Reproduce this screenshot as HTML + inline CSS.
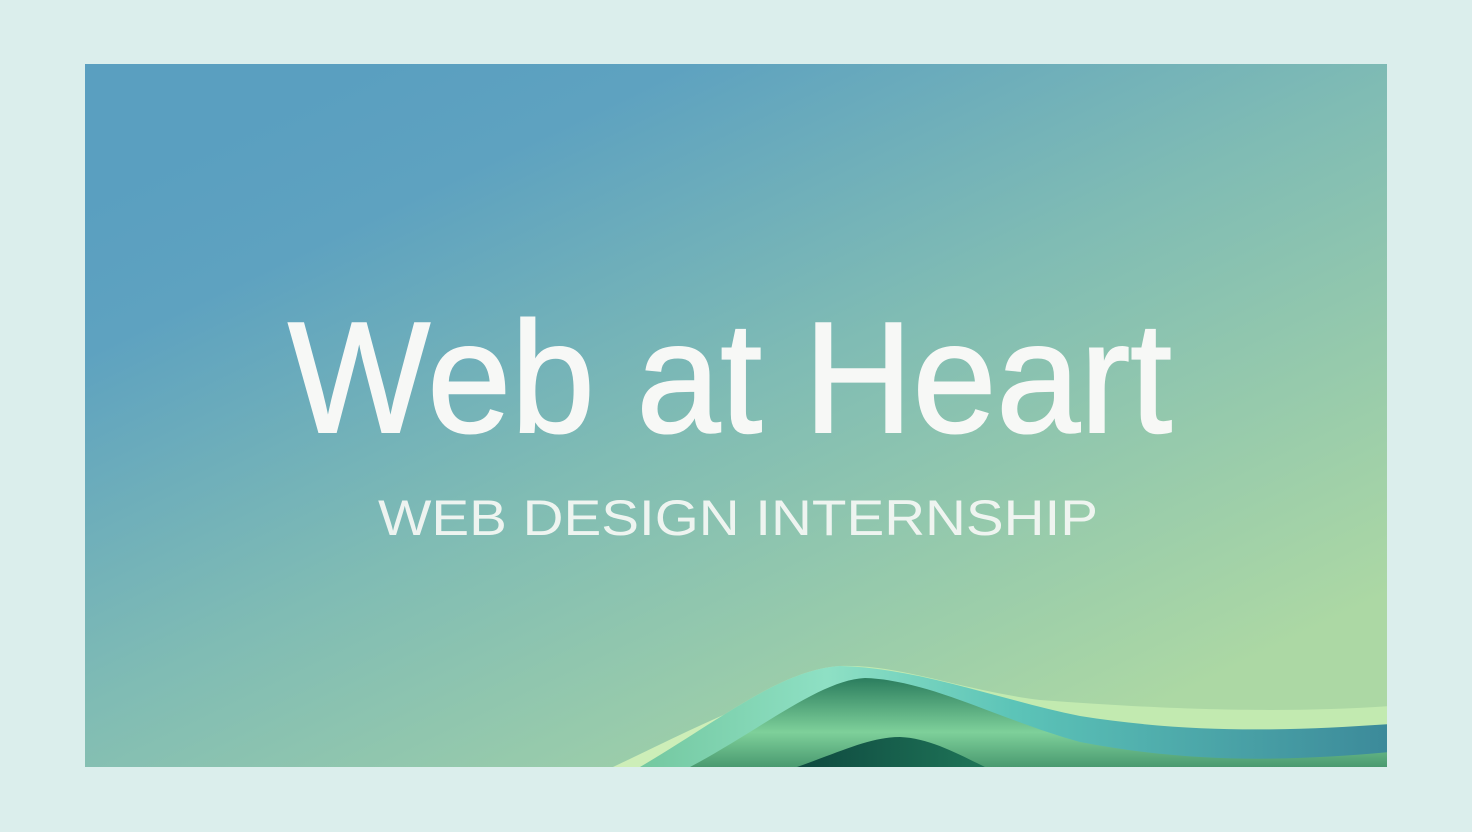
<!DOCTYPE html>
<html><head><style>
html,body{margin:0;padding:0;width:1472px;height:832px;background:#dbeeec;overflow:hidden}
svg{display:block}
</style></head><body>
<svg width="1472" height="832" viewBox="0 0 1472 832" xmlns="http://www.w3.org/2000/svg">
<defs>
<linearGradient id="bg" x1="500" y1="0" x2="900" y2="832" gradientUnits="userSpaceOnUse">
<stop offset="0" stop-color="#5a9fc0"/>
<stop offset="0.15" stop-color="#5ea2c0"/>
<stop offset="0.5" stop-color="#80bcb4"/>
<stop offset="1" stop-color="#acd8a4"/>
</linearGradient>
<linearGradient id="teal" x1="640" y1="0" x2="1387" y2="0" gradientUnits="userSpaceOnUse">
<stop offset="0" stop-color="#74c8a0"/>
<stop offset="0.25" stop-color="#8ee0c4"/>
<stop offset="0.5" stop-color="#5cc4b8"/>
<stop offset="1" stop-color="#3c8a9a"/>
</linearGradient>
<linearGradient id="mid" x1="0" y1="680" x2="0" y2="767" gradientUnits="userSpaceOnUse">
<stop offset="0" stop-color="#2e8060"/>
<stop offset="0.6" stop-color="#7ed09a"/>
<stop offset="1" stop-color="#4a9a70"/>
</linearGradient>
<linearGradient id="dark" x1="800" y1="0" x2="990" y2="0" gradientUnits="userSpaceOnUse">
<stop offset="0" stop-color="#0f4a40"/>
<stop offset="1" stop-color="#1f7558"/>
</linearGradient>
<clipPath id="c"><rect x="85" y="64" width="1302" height="703"/></clipPath>
</defs>
<rect x="85" y="64" width="1302" height="703" fill="url(#bg)"/>
<g clip-path="url(#c)">
<path d="M613 767 C680 735 720 715 760 700 L800 690 L700 767 Z" fill="#cdeeb8"/>
<path d="M640 767 C720 720 780 670 840 666 C900 664 960 690 1040 700 C1200 712 1300 712 1390 706 L1390 767 Z" fill="#c2eab0"/>
<path d="M640 767 C720 720 780 670 840 666 C920 668 1000 700 1080 716 C1200 735 1300 730 1390 724 L1390 767 Z" fill="url(#teal)"/>
<path d="M690 767 C760 730 820 680 865 678 C930 680 1000 720 1080 742 C1200 765 1300 760 1390 752 L1390 767 Z" fill="url(#mid)"/>
<path d="M797 767 C840 752 870 737 900 737 C930 738 960 755 985 767 Z" fill="url(#dark)"/>
</g>
<text x="730" y="432" text-anchor="middle" textLength="884" lengthAdjust="spacingAndGlyphs" font-family="Liberation Sans, sans-serif" font-size="158" fill="#f7f8f6" stroke="#f7f8f6" stroke-width="2">Web at Heart</text>
<text x="738" y="535" text-anchor="middle" textLength="720" lengthAdjust="spacingAndGlyphs" font-family="Liberation Sans, sans-serif" font-size="50" fill="#f4f7f4" opacity="0.95">WEB DESIGN INTERNSHIP</text>
</svg>
</body></html>
